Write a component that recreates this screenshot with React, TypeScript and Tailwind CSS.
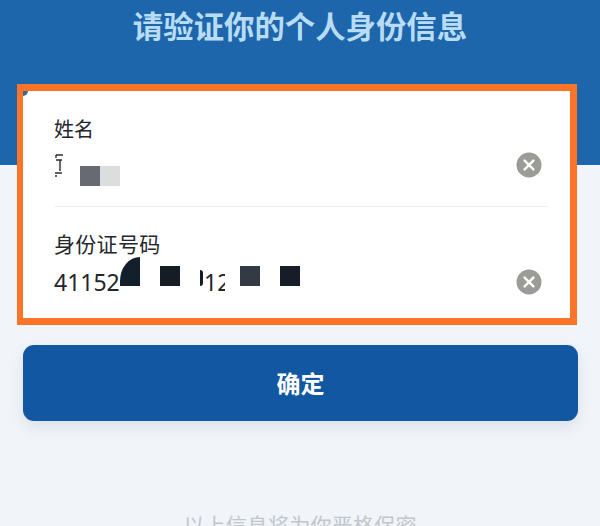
import React from 'react';

const ClearIcon = () => (
  <svg width="26" height="26" viewBox="0 0 26 26" className="shrink-0">
    <circle cx="13" cy="13" r="12.5" fill="#9b9b97" />
    <path d="M8.6 8.6 L17.4 17.4 M17.4 8.6 L8.6 17.4" stroke="#ffffff" strokeWidth="2.4" strokeLinecap="round" />
  </svg>
);

const App: React.FC = () => {
  return (
    <div
      className="w-[600px] h-[526px] overflow-hidden bg-[#f1f4f8]"
      style={{ fontFamily: '"Noto Sans CJK SC", "Noto Sans", sans-serif' }}
    >
      {/* Cabecera */}
      <div className="h-[165px] bg-[#1d66ab] flex justify-center pt-[5px]">
        <h1 className="h-[40px] text-[30.4px] leading-[40px] font-bold text-[#b9dcf6]">请验证你的个人身份信息</h1>
      </div>

      {/* Tarjeta */}
      <div className="relative -mt-[81px] ml-[17px] w-[560px] h-[241px] border-y-[7px] border-r-[7px] border-l-[6px] border-[#fb7428] bg-white">
        <div className="absolute left-0 top-0 w-[5px] h-[5px] bg-[#3f6796] rounded-br-[5px]" />
        <div className="pl-[31px] pr-[22px]">
          <div className="h-[116px] border-b border-[#eeeff1] flex flex-col">
            <div className="mt-[24px] h-[28px] text-[20px] leading-[28px] text-[#24272b]">姓名</div>
            <div className="flex items-center justify-between h-[44px]">
              <div className="flex items-start h-[44px]">
                <svg width="10" height="24" viewBox="0 0 10 24" className="mt-[10px] shrink-0">
                  <path d="M2 2 H9 M2 2 V5 M2 7 H8 M6 7 V18 M1 20 H8 M1 23 H3" stroke="#2a2c30" strokeWidth="1.4" fill="none" />
                </svg>
                <div className="ml-[16px] mt-[23px] w-[20px] h-[20px] bg-[#676a73]" />
                <div className="mt-[23px] w-[20px] h-[20px] bg-[#dcdddf]" />
              </div>
              <div className="mr-[6px]">
                <ClearIcon />
              </div>
            </div>
          </div>
          <div className="flex flex-col">
            <div className="mt-[21px] h-[30px] text-[21px] leading-[30px] tracking-[0.3px] text-[#24272b]">身份证号码</div>
            <div className="flex items-center justify-between h-[44px] mt-[2px]">
              <div className="relative flex items-center h-[44px] w-[260px] text-[23px] leading-[44px] text-[#22252a]">
                <span className="w-[66px]" style={{ fontFamily: '"Noto Sans", sans-serif' }}>41152</span>
                <div className="w-[20px] h-[29px] -mt-[21px] bg-[#13202c] rounded-tl-[20px_24px]" />
                <div className="ml-[20px] -mt-[12px] w-[20px] h-[20px] bg-[#161c24]" />
                <div className="ml-[20px] -mt-[8px] w-[3px] h-[16px] bg-[#161c24] rounded-r-full" />
                <span className="ml-[1px] w-[26px] whitespace-nowrap" style={{ fontFamily: '"Noto Sans", sans-serif' }}>12</span>
                {/* trozo borrado del ultimo digito */}
                <div className="absolute left-[171px] top-[10px] w-[8px] h-[22px] bg-white" />
                <div className="ml-[10px] -mt-[12px] w-[20px] h-[20px] bg-[#343a44]" />
                <div className="ml-[20px] -mt-[12px] w-[20px] h-[20px] bg-[#161c28]" />
              </div>
              <div className="mr-[6px]">
                <ClearIcon />
              </div>
            </div>
          </div>
        </div>
      </div>

      {/* Boton */}
      <button className="mt-[20px] ml-[23px] w-[555px] h-[76px] rounded-[11px] bg-[#1257a2] text-white text-[24px] font-bold shadow-[0_6px_14px_rgba(40,70,120,0.10)]">
        确定
      </button>

      <div className="mt-[88px] text-center text-[21px] leading-[30px] tracking-[0.2px] text-[#c3c7cc]">以上信息将为你严格保密</div>
    </div>
  );
};

export default App;
